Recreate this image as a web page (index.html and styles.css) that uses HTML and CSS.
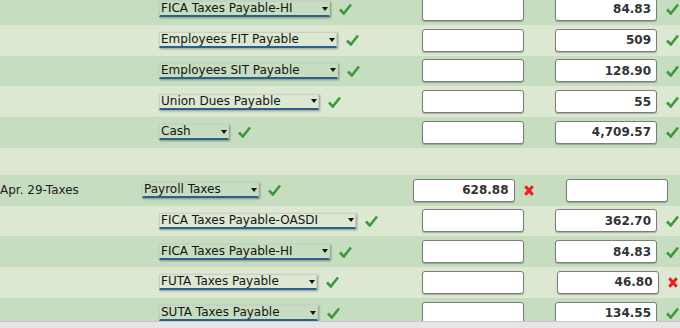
FILE: index.html
```html
<!DOCTYPE html>
<html lang="en">
<head>
    <meta charset="UTF-8">
    <title>Journal Entries</title>
    <link rel="stylesheet" href="styles.css">
</head>
<body>

    <!-- Journal rows (scrolled view) -->
    <div class="sheet">

        <div class="row dark">
            <div class="desc"></div>
            <div class="acct child">
                <span class="select"><span class="sel-text">FICA Taxes Payable-HI</span><svg class="arrow" width="6" height="4" viewBox="0 0 6 4"><polygon points="0,0 6,0 3,4"/></svg></span>
                <svg class="ok" width="13" height="12" viewBox="0 0 13 12"><path d="M1 6.5 L4.8 10.5 L12 1.5"/></svg>
            </div>
            <div class="amt debit"><input class="field" type="text" value=""></div>
            <div class="amt credit"><input class="field" type="text" value="84.83"><svg class="ok" width="13" height="12" viewBox="0 0 13 12"><path d="M1 6.5 L4.8 10.5 L12 1.5"/></svg></div>
        </div>

        <div class="row light">
            <div class="desc"></div>
            <div class="acct child">
                <span class="select"><span class="sel-text">Employees FIT Payable</span><svg class="arrow" width="6" height="4" viewBox="0 0 6 4"><polygon points="0,0 6,0 3,4"/></svg></span>
                <svg class="ok" width="13" height="12" viewBox="0 0 13 12"><path d="M1 6.5 L4.8 10.5 L12 1.5"/></svg>
            </div>
            <div class="amt debit"><input class="field" type="text" value=""></div>
            <div class="amt credit"><input class="field" type="text" value="509"><svg class="ok" width="13" height="12" viewBox="0 0 13 12"><path d="M1 6.5 L4.8 10.5 L12 1.5"/></svg></div>
        </div>

        <div class="row dark">
            <div class="desc"></div>
            <div class="acct child">
                <span class="select"><span class="sel-text">Employees SIT Payable</span><svg class="arrow" width="6" height="4" viewBox="0 0 6 4"><polygon points="0,0 6,0 3,4"/></svg></span>
                <svg class="ok" width="13" height="12" viewBox="0 0 13 12"><path d="M1 6.5 L4.8 10.5 L12 1.5"/></svg>
            </div>
            <div class="amt debit"><input class="field" type="text" value=""></div>
            <div class="amt credit"><input class="field" type="text" value="128.90"><svg class="ok" width="13" height="12" viewBox="0 0 13 12"><path d="M1 6.5 L4.8 10.5 L12 1.5"/></svg></div>
        </div>

        <div class="row light">
            <div class="desc"></div>
            <div class="acct child">
                <span class="select"><span class="sel-text">Union Dues Payable</span><svg class="arrow" width="6" height="4" viewBox="0 0 6 4"><polygon points="0,0 6,0 3,4"/></svg></span>
                <svg class="ok" width="13" height="12" viewBox="0 0 13 12"><path d="M1 6.5 L4.8 10.5 L12 1.5"/></svg>
            </div>
            <div class="amt debit"><input class="field" type="text" value=""></div>
            <div class="amt credit"><input class="field" type="text" value="55"><svg class="ok" width="13" height="12" viewBox="0 0 13 12"><path d="M1 6.5 L4.8 10.5 L12 1.5"/></svg></div>
        </div>

        <div class="row dark">
            <div class="desc"></div>
            <div class="acct child">
                <span class="select"><span class="sel-text">Cash</span><svg class="arrow" width="6" height="4" viewBox="0 0 6 4"><polygon points="0,0 6,0 3,4"/></svg></span>
                <svg class="ok" width="13" height="12" viewBox="0 0 13 12"><path d="M1 6.5 L4.8 10.5 L12 1.5"/></svg>
            </div>
            <div class="amt debit"><input class="field" type="text" value=""></div>
            <div class="amt credit"><input class="field" type="text" value="4,709.57"><svg class="ok" width="13" height="12" viewBox="0 0 13 12"><path d="M1 6.5 L4.8 10.5 L12 1.5"/></svg></div>
        </div>

        <!-- espacio entre asientos -->
        <div class="row light spacer"></div>

        <div class="row dark">
            <div class="desc">Apr. 29-Taxes</div>
            <div class="acct">
                <span class="select"><span class="sel-text">Payroll Taxes</span><svg class="arrow" width="6" height="4" viewBox="0 0 6 4"><polygon points="0,0 6,0 3,4"/></svg></span>
                <svg class="ok" width="13" height="12" viewBox="0 0 13 12"><path d="M1 6.5 L4.8 10.5 L12 1.5"/></svg>
            </div>
            <div class="amt debit"><input class="field" type="text" value="628.88"><svg class="bad" width="10" height="11" viewBox="0 0 10 11"><path d="M1.3 1.3 L8.7 9.7 M8.7 1.3 L1.3 9.7"/></svg></div>
            <div class="amt credit"><input class="field" type="text" value=""></div>
        </div>

        <div class="row light">
            <div class="desc"></div>
            <div class="acct child">
                <span class="select"><span class="sel-text">FICA Taxes Payable-OASDI</span><svg class="arrow" width="6" height="4" viewBox="0 0 6 4"><polygon points="0,0 6,0 3,4"/></svg></span>
                <svg class="ok" width="13" height="12" viewBox="0 0 13 12"><path d="M1 6.5 L4.8 10.5 L12 1.5"/></svg>
            </div>
            <div class="amt debit"><input class="field" type="text" value=""></div>
            <div class="amt credit"><input class="field" type="text" value="362.70"><svg class="ok" width="13" height="12" viewBox="0 0 13 12"><path d="M1 6.5 L4.8 10.5 L12 1.5"/></svg></div>
        </div>

        <div class="row dark">
            <div class="desc"></div>
            <div class="acct child">
                <span class="select"><span class="sel-text">FICA Taxes Payable-HI</span><svg class="arrow" width="6" height="4" viewBox="0 0 6 4"><polygon points="0,0 6,0 3,4"/></svg></span>
                <svg class="ok" width="13" height="12" viewBox="0 0 13 12"><path d="M1 6.5 L4.8 10.5 L12 1.5"/></svg>
            </div>
            <div class="amt debit"><input class="field" type="text" value=""></div>
            <div class="amt credit"><input class="field" type="text" value="84.83"><svg class="ok" width="13" height="12" viewBox="0 0 13 12"><path d="M1 6.5 L4.8 10.5 L12 1.5"/></svg></div>
        </div>

        <div class="row light">
            <div class="desc"></div>
            <div class="acct child">
                <span class="select"><span class="sel-text">FUTA Taxes Payable</span><svg class="arrow" width="6" height="4" viewBox="0 0 6 4"><polygon points="0,0 6,0 3,4"/></svg></span>
                <svg class="ok" width="13" height="12" viewBox="0 0 13 12"><path d="M1 6.5 L4.8 10.5 L12 1.5"/></svg>
            </div>
            <div class="amt debit"><input class="field" type="text" value=""></div>
            <div class="amt credit"><input class="field" type="text" value="46.80"><svg class="bad" width="10" height="11" viewBox="0 0 10 11"><path d="M1.3 1.3 L8.7 9.7 M8.7 1.3 L1.3 9.7"/></svg></div>
        </div>

        <div class="row dark">
            <div class="desc"></div>
            <div class="acct child">
                <span class="select"><span class="sel-text">SUTA Taxes Payable</span><svg class="arrow" width="6" height="4" viewBox="0 0 6 4"><polygon points="0,0 6,0 3,4"/></svg></span>
                <svg class="ok" width="13" height="12" viewBox="0 0 13 12"><path d="M1 6.5 L4.8 10.5 L12 1.5"/></svg>
            </div>
            <div class="amt debit"><input class="field" type="text" value=""></div>
            <div class="amt credit"><input class="field" type="text" value="134.55"><svg class="ok" width="13" height="12" viewBox="0 0 13 12"><path d="M1 6.5 L4.8 10.5 L12 1.5"/></svg></div>
        </div>

    </div>

    <!-- Barra de desplazamiento inferior -->
    <div class="scrollbar"></div>

</body>
</html>
```

FILE: styles.css
```css
/* General */
body {
    margin: 0;
    padding: 0;
    height: 328px;
    overflow: hidden;
    font-family: "DejaVu Sans", Verdana, sans-serif;
    font-size: 12px;
    color: #1e1e1e;
    background: #dde8d3;
}

/* Filas del diario */
.sheet {
    width: 700px;
    margin-top: -6px;
}

.row {
    display: flex;
    align-items: center;
    height: 30.75px;
}

.row.dark {
    background: #c6ddc0;
}

.row.light {
    background: #dde8d3;
}

.row.spacer {
    height: 27px;
}

.desc {
    width: 142px;
    white-space: nowrap;
    color: #1e1e1e;
}

/* Cuenta */
.acct {
    width: 258px;
    display: flex;
    align-items: center;
    gap: 9px;
}

.acct.child {
    padding-left: 17px;
    box-sizing: border-box;
}

.select {
    display: inline-flex;
    align-items: center;
    height: 16px;
    box-sizing: border-box;
    padding: 0 1px 0 1px;
    border: 1px solid #c9cfc4;
    border-bottom: 2px solid #2b5f8f;
    box-shadow: 1px 1px 2px rgba(0, 0, 0, 0.35);
    white-space: nowrap;
    line-height: 13px;
    color: #141414;
}

.arrow {
    margin-left: 30px;
    fill: #111;
}

/* Importes */
.amt {
    display: flex;
    align-items: center;
    justify-content: center;
    gap: 9px;
}

.debit {
    width: 146px;
}

.credit {
    width: 142px;
}

.field {
    width: 102px;
    height: 23px;
    box-sizing: border-box;
    margin: 0;
    padding: 0 5px;
    border: 1px solid #7c7c7c;
    border-radius: 3px;
    box-shadow: 0 1px 1px rgba(0, 0, 0, 0.25);
    background: #fff;
    text-align: right;
    font-family: "DejaVu Sans", Verdana, sans-serif;
    font-size: 12px;
    font-weight: bold;
    color: #333;
}

.ok path {
    fill: none;
    stroke: #3a9a3c;
    stroke-width: 2.6;
}

.bad path {
    fill: none;
    stroke: #ee1c1c;
    stroke-width: 3;
}

/* Barra inferior */
.scrollbar {
    position: fixed;
    left: 0;
    right: 0;
    bottom: 0;
    height: 6px;
    background: #e6e6e6;
    border-top: 1px solid #c8c8c8;
}
```
